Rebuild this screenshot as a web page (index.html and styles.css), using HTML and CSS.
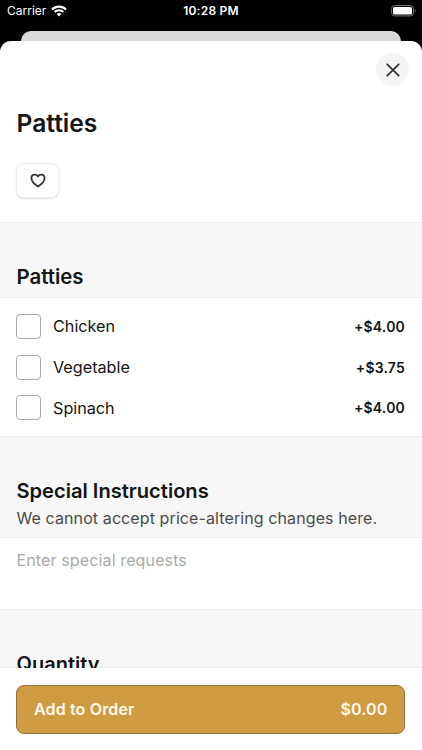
FILE: index.html
```html
<!DOCTYPE html>
<html lang="en">
<head>
<meta charset="utf-8">
<title>Patties</title>
<link rel="stylesheet" href="styles.css">
</head>
<body>
<div class="screen">
  <header class="status">
    <div class="status-left"><span class="carrier">Carrier</span>
      <svg class="wifi" width="16" height="12" viewBox="0 0 16 12" fill="none" stroke="#fff" stroke-width="2.1"><path d="M1 4.5a10 10 0 0 1 14 0M3.5 7.1a6.4 6.4 0 0 1 9 0"/><path d="M8 11.5 5.6 9.1a3.4 3.4 0 0 1 4.8 0z" fill="#fff" stroke="none"/></svg>
    </div>
    <time class="clock">10:28 PM</time>
    <svg class="battery" width="26" height="12" viewBox="0 0 26 12"><rect x=".6" y=".6" width="21.8" height="10.3" rx="3" fill="none" stroke="#777"/><rect x="2" y="2" width="19" height="7.5" rx="1.6" fill="#fff"/><path d="M23.7 4c1.3.5 1.3 3.1 0 3.6z" fill="#777"/></svg>
  </header>
  <div class="back-card"></div>
  <main class="sheet">
    <div class="toolbar">
      <button class="close" aria-label="Close"><svg width="14" height="14" viewBox="0 0 14 14" fill="none" stroke="#333" stroke-width="1.8" stroke-linecap="round"><path d="M1.3 1.3l11.4 11.4M12.7 1.3l-11.4 11.4"/></svg></button>
    </div>
    <section class="intro">
      <h1>Patties</h1>
      <button class="favorite" aria-label="Favorite"><svg width="16" height="15" viewBox="0 0 16 15" fill="none" stroke="#333" stroke-width="1.8" stroke-linejoin="round"><path d="M8 13.6C5.2 11.7 1.4 8.7 1.4 5.2 1.4 3.1 2.8 1.6 4.7 1.6 6 1.6 7.3 2.3 8 3.5 8.7 2.3 10 1.6 11.3 1.6c1.9 0 3.3 1.5 3.3 3.6 0 3.5-3.8 6.5-6.6 8.4z"/></svg></button>
    </section>
    <div class="heading heading-options"><h2>Patties</h2></div>
    <section class="options">
      <label class="option"><span class="box"></span><span class="name">Chicken</span><span class="price">+$4.00</span></label>
      <label class="option"><span class="box"></span><span class="name">Vegetable</span><span class="price">+$3.75</span></label>
      <label class="option"><span class="box"></span><span class="name">Spinach</span><span class="price">+$4.00</span></label>
    </section>
    <div class="heading heading-notes"><h2>Special Instructions</h2><p>We cannot accept price-altering changes here.</p></div>
    <section class="notes">Enter special requests</section>
    <div class="heading heading-quantity"><h2>Quantity</h2></div>
  </main>
  <footer class="footer"><button class="order"><span class="order-label">Add to Order</span><span class="order-total">$0.00</span></button></footer>
</div>
</body>
</html>
```
FILE: styles.css
```css
* { box-sizing: border-box; }
body { margin: 0; font-family: Inter, "Liberation Sans", sans-serif; color: #141516; background: #000; }
h1, h2, p { margin: 0; }
button { border: 0; padding: 0; font: inherit; }
svg { display: block; }
.screen { width: 422px; height: 750px; display: flex; flex-direction: column; overflow: hidden; background: #000; }
.status { height: 31px; flex: none; display: grid; grid-template-columns: 1fr auto 1fr; align-items: start; padding: 3px 6px 0 7px; color: #fff; line-height: 15px; }
.status-left { display: flex; gap: 5px; }
.carrier { font-size: 12px; letter-spacing: 0; }
.wifi { margin-top: 2px; }
.clock { font-size: 12px; font-weight: 600; letter-spacing: .24px; margin-left: -1px; }
.battery { justify-self: end; margin: 2px -1px 0 0; }
.back-card { height: 10px; flex: none; margin: 0 21px; background: #dadada; border-radius: 10px 10px 0 0; }
.sheet { flex: 1; min-height: 0; overflow: hidden; background: #fff; border-radius: 11px 11px 0 0; }
.toolbar { height: 57px; display: flex; justify-content: flex-end; padding: 12px 12.6px 0; }
.close { width: 33px; height: 33px; border-radius: 50%; background: #f5f5f5; display: grid; place-items: center; }
.intro { height: 124px; padding: 9px 17px 0 16.5px; }
h1 { font-size: 24.6px; line-height: 32px; font-weight: 600; }
.favorite { width: 43px; height: 35px; margin-top: 24px; margin-left: -.2px; background: #fff; border: 1px solid #eee; border-radius: 8px; box-shadow: 0 1px 2px #0002; display: grid; place-items: center; }
.heading { background: #f7f7f7; padding-left: 16.5px; border-top: 1px solid #f0f0f0; border-bottom: 1px solid #f0f0f0; }
h2 { font-size: 20.4px; line-height: 26px; font-weight: 600; }
.heading-options { height: 76px; padding-top: 41px; }
.options { height: 138px; padding: 8px 17px 0 16px; }
.option { height: 40.7px; display: flex; align-items: center; }
.box { width: 25px; height: 25px; border: 1px solid #aaa; border-radius: 4px; background: #fff; }
.name { margin-left: 12px; font-size: 16.2px; }
.price { margin-left: auto; font-size: 14px; font-weight: 600; letter-spacing: .2px; }
.heading-notes { height: 102px; padding-top: 41px; }
.heading-notes h2 { font-size: 20.1px; }
.heading-notes p { font-size: 16px; line-height: 24px; margin-top: 2px; color: #4b4b4b; letter-spacing: .1px; }
.notes { height: 71px; padding: 10px 16.5px; font-size: 16px; line-height: 24px; color: #aaa; letter-spacing: .13px; }
.heading-quantity { height: 100px; padding-top: 41px; }
.heading-quantity h2 { font-size: 20px; }
.footer { height: 82px; flex: none; position: relative; background: #fff; padding: 16.5px 16.6px 0 16.4px; box-shadow: 0 0 3px #0001; }
.order { width: 100%; height: 49px; display: flex; align-items: center; justify-content: space-between; padding: 0 17px 0 16.6px; color: #fff9e9; background: #d09c43; border: 1px solid #967039; border-radius: 8px; font-size: 16px; font-weight: 600; letter-spacing: .15px; }
```
